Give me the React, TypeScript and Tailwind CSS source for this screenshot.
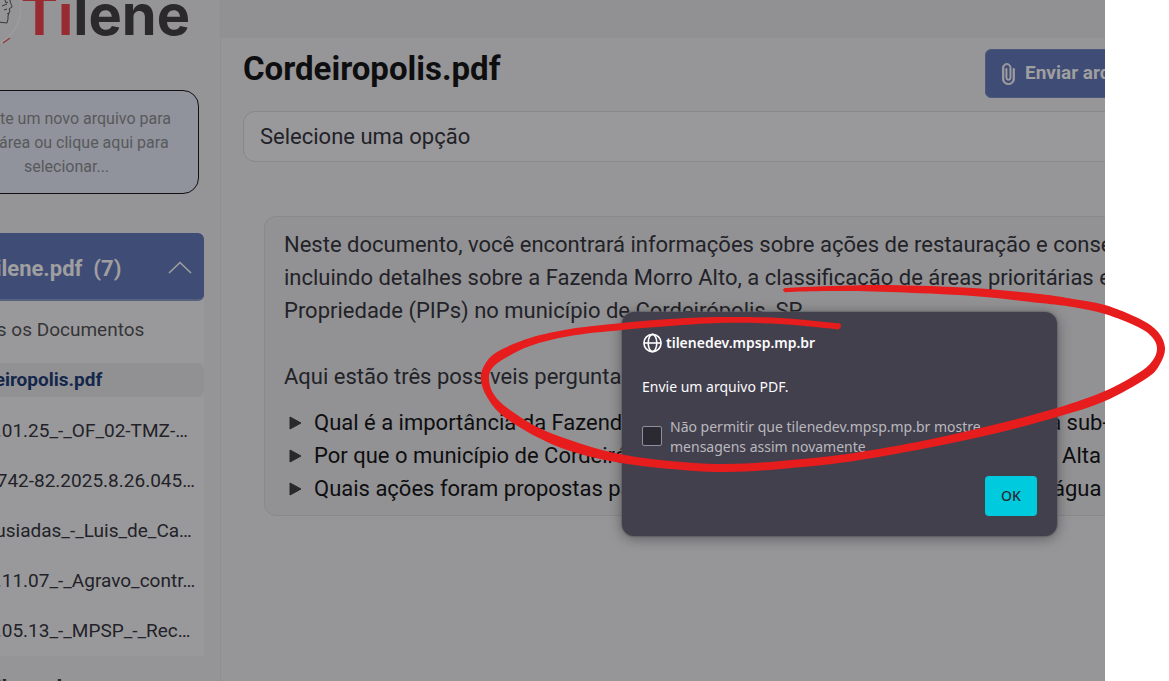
import { useState } from 'react';

type Point = [number, number];

const files = [
  '2024.01.25_-_OF_02-TMZ-…',
  '1500742-82.2025.8.26.045…',
  'Os_Lusiadas_-_Luis_de_Ca…',
  '2024.11.07_-_Agravo_contr…',
  '2024.05.13_-_MPSP_-_Rec…',
];

const questions = [
  'Qual é a importância da Fazenda Morro Alto para a conservação da fauna na sub-bacia?',
  'Por que o município de Cordeirópolis foi identificado com área de prioridade Alta II?',
  'Quais ações foram propostas para a garantia da qualidade e quantidade da água na região?',
];

const outline: Point[] = [
  [787, 288], [830, 286], [890, 285], [973, 288], [1040, 294], [1073, 299], [1105, 305], [1140, 319], [1158, 332], [1165, 348],
  [1160, 364], [1147, 378], [1105, 401], [1057, 417], [993, 434], [927, 448], [860, 460], [803, 467], [727, 472], [660, 468],
  [610, 461], [570, 451], [537, 437], [503, 416], [487, 397], [481, 380], [484, 366], [497, 352], [530, 338], [570, 329],
  [622, 323], [670, 319], [720, 317], [780, 318], [835, 323], [839, 323], [841, 326], [839, 329], [835, 329],
  [780, 324], [720, 323], [670, 326], [622, 330], [570, 336], [530, 346], [502, 360], [491, 370], [489, 380],
  [493, 393], [506, 407], [537, 427], [570, 440], [610, 452], [660, 460], [727, 464], [803, 459], [860, 452], [927, 440],
  [993, 425], [1057, 408], [1105, 391], [1140, 372], [1153, 360], [1157, 348], [1152, 337], [1138, 327], [1105, 314],
  [1073, 307], [1040, 303], [973, 296], [890, 292], [830, 291], [787, 292], [785, 292], [783, 290], [785, 288],
];

function smoothPath(points: Point[]) {
  const n = points.length;
  const at = (i: number) => points[(i + n) % n];
  const limit = (v: number, max: number) => Math.max(-max, Math.min(max, v));
  let d = `M${at(0)[0]} ${at(0)[1]}`;
  for (let i = 0; i < n; i++) {
    const [a, b, c, e] = [at(i - 1), at(i), at(i + 1), at(i + 2)];
    const reach = Math.hypot(c[0] - b[0], c[1] - b[1]) / 2;
    const x1 = b[0] + limit((c[0] - a[0]) / 6, reach);
    const y1 = b[1] + limit((c[1] - a[1]) / 6, reach);
    const x2 = c[0] - limit((e[0] - b[0]) / 6, reach);
    const y2 = c[1] - limit((e[1] - b[1]) / 6, reach);
    d += `C${x1} ${y1} ${x2} ${y2} ${c[0]} ${c[1]}`;
  }
  return d + 'Z';
}

function Logo() {
  return (
    <div className="flex h-[90px] items-start justify-end pr-[30px]">
      <svg className="h-[50px] w-[75px] shrink-0" viewBox="-52 0 75 50" fill="none" aria-hidden="true">
        <circle cx="-19" cy="7" r="42" stroke="#9b9b9d" strokeWidth="2" />
        <path
          d="M7 0L8 3 10 2M4 6L9 4M12 0C12 3 14 5 14 7L11 9 12 11 11 13 9 14M11 13L10 16 10 19 9 23 0 22M6 10L9 9"
          stroke="#38363a"
          strokeWidth="1"
        />
        <path d="M-5 47L2 44" stroke="#38363a" strokeWidth="1.2" />
        <path d="M5 43L12 38" stroke="#96333a" strokeWidth="1.2" />
      </svg>
      <span className="-mt-5 font-['Inter'] text-[56px] leading-[70px] font-bold text-[#2c292d]">
        <span className="text-[#982b31]">Ti</span>lene
      </span>
    </div>
  );
}

function Sidebar() {
  return (
    <aside className="flex w-[221px] shrink-0 justify-end overflow-hidden border-r border-[#8f8f92] bg-[#959597]">
      <div className="w-[286px] shrink-0">
        <Logo />
        <button className="block h-[104px] w-[265px] rounded-2xl border border-[#111114] bg-[#90939b] px-5 pt-0.5 text-center text-base leading-6 text-[#58595d]">
          Arraste um novo arquivo para esta área ou clique aqui para selecionar...
        </button>
        <div className="mt-[39px] mr-4 bg-[#99999b]">
          <button className="flex h-[68px] w-full items-center justify-between rounded-md border-b-2 border-[#56607f] bg-[#3f4c76] pt-1 pr-3 pl-12 text-[22px] font-bold text-[#a09f9f]">
            <span className="whitespace-pre">Tilene.pdf  (7)</span>
            <svg className="h-6 w-6" viewBox="0 0 24 24" fill="none" stroke="currentColor" strokeWidth="1.6" aria-hidden="true">
              <path d="M1 17L12 6.500 23 17" />
            </svg>
          </button>
          <nav className="text-[19px] whitespace-nowrap">
            <a href="#todos" className="flex h-[62px] items-center pb-1 pl-5 text-[#353538]">Todos os Documentos</a>
            <a href="#cordeiropolis" className="flex h-[34px] items-center rounded-md bg-[#919193] pl-5 font-bold text-[#14274b]">Cordeiropolis.pdf</a>
            <ul className="pt-[9px]">
              {files.map((file) => (
                <li key={file}>
                  <a href="#documento" className="flex h-[50px] items-center pl-5 text-[#222228]">{file}</a>
                </li>
              ))}
            </ul>
          </nav>
        </div>
        <p className="mt-[19px] pl-12 text-[22px] leading-7 font-bold text-[#28282c]">Tilene.docx</p>
      </div>
    </aside>
  );
}

function Main() {
  return (
    <main className="min-w-0 flex-1 overflow-hidden">
      <div className="h-[38px] bg-[#919193]" />
      <div className="-mr-[70px] pt-[11px] pl-[22px]">
        <header className="flex items-start justify-between">
          <h1 className="text-[33px] leading-10 font-bold text-[#0e0e10]">Cordeiropolis.pdf</h1>
          <button className="flex h-[49px] w-[190px] shrink-0 items-center gap-1.5 rounded-md border border-[#4c587e] bg-[#3f4c76] pl-[11px] text-[19px] font-bold whitespace-nowrap text-[#a09f9f]">
            <svg className="h-[22px] w-[22px]" viewBox="0 0 24 24" fill="currentColor" stroke="currentColor" strokeWidth="0.9" aria-hidden="true">
              <path d="M17.500 6v11.500c0 2.760-2.240 4.800-5 4.800s-5-2.040-5-4.800V5a3.300 3.300 0 0 1 6.600 0v11c0 .9-.7 1.600-1.600 1.600s-1.600-.7-1.600-1.600V6H9.700v10a2.800 2.800 0 0 0 5.600 0V5c0-2.500-2.100-4.400-4.550-4.400S6 2.500 6 5v12.500C6 21 9 23.700 12.500 23.700S19 21 19 17.500V6h-1.500z" />
            </svg>
            Enviar arquivo
          </button>
        </header>
        <select
          aria-label="Selecione uma opção"
          className="mt-[13px] block h-[51px] w-full appearance-none rounded-xl border border-[#88888a] bg-[#99999b] px-4 text-[22px] text-[#222228]"
        >
          <option>Selecione uma opção</option>
        </select>
        <section className="mt-[54px] ml-[21px] h-[300px] rounded-xl border border-[#89898b] bg-[#929294] px-[19px] pt-[11px] text-[22px] leading-[33px] whitespace-nowrap text-[#222228]">
          <p>
            Neste documento, você encontrará informações sobre ações de restauração e conservação
            <br />
            incluindo detalhes sobre a Fazenda Morro Alto, a classificação de áreas prioritárias e
            <br />
            Propriedade (PIPs) no município de Cordeirópolis, SP.
          </p>
          <p className="mt-[33px]">Aqui estão três possíveis perguntas:</p>
          <ul className="mt-[13px] text-[#0e0e10]">
            {questions.map((q) => (
              <li key={q} className="flex items-center gap-3 pl-[5px]">
                <svg className="h-[14px] w-[13px] shrink-0" viewBox="0 0 13 14" fill="#29292c" aria-hidden="true">
                  <path d="M1 1L12 7 1 13Z" stroke="#29292c" strokeLinejoin="round" />
                </svg>
                {q}
              </li>
            ))}
          </ul>
        </section>
      </div>
    </main>
  );
}

function AlertDialog() {
  const [blocked, setBlocked] = useState(false);
  return (
    <div
      role="dialog"
      aria-label="tilenedev.mpsp.mp.br"
      className="absolute top-[312px] left-[622px] flex h-[224px] w-[435px] flex-col rounded-xl bg-[#43404d] px-5 pt-[21px] pb-5 font-['Noto_Sans',sans-serif] text-sm leading-5 text-[#fbfbfe] shadow-[0_2px_14px_rgba(0,0,0,0.4),0_0_1px_1px_rgba(110,110,118,0.6)]"
    >
      <div className="flex items-center gap-1 font-semibold">
        <svg className="h-5 w-5" viewBox="0 0 20 20" fill="none" stroke="currentColor" strokeWidth="1.6" aria-hidden="true">
          <circle cx="10.500" cy="10" r="8.600" />
          <ellipse cx="10.500" cy="10" rx="4.300" ry="8.600" />
          <path d="M2 10H19" />
        </svg>
        tilenedev.mpsp.mp.br
      </div>
      <p className="mt-6">Envie um arquivo PDF.</p>
      <label className="mt-[18px] flex items-center gap-2 text-[#b9b8be]">
        <input
          type="checkbox"
          checked={blocked}
          onChange={(e) => setBlocked(e.target.checked)}
          className="h-5 w-5 shrink-0 appearance-none rounded-xs border border-[#8f8f9d] bg-[#2b2a33] checked:bg-[#00cadb]"
        />
        <span className="pt-0.5">
          Não permitir que tilenedev.mpsp.mp.br mostre
          <br />
          mensagens assim novamente
        </span>
      </label>
      <button className="mt-auto h-10 w-[52px] self-end rounded bg-[#00cadd] font-medium text-[#2b2a33]">OK</button>
    </div>
  );
}

export default function App() {
  return (
    <div className="relative flex h-screen overflow-hidden bg-white font-['Roboto',sans-serif]">
      <div className="flex min-w-0 flex-1 bg-[#969698]">
        <Sidebar />
        <Main />
      </div>
      <div className="w-16 shrink-0 bg-white" />
      <AlertDialog />
      <svg className="pointer-events-none absolute top-0 left-0 h-[681px] w-[1169px]" viewBox="0 0 1169 681" aria-hidden="true">
        <path d={smoothPath(outline)} fill="#e71c1c" />
      </svg>
    </div>
  );
}
